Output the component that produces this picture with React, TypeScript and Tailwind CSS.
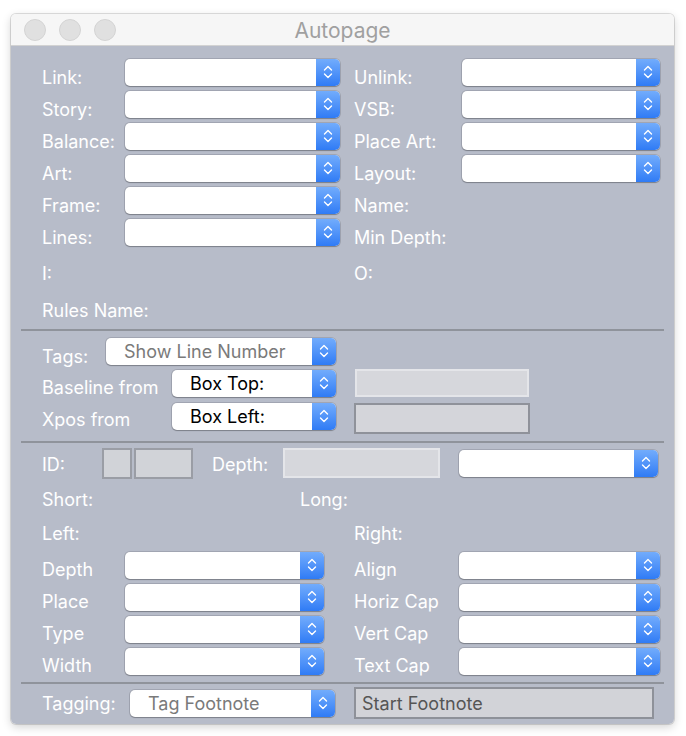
import React from "react";

const font = { fontFamily: "Inter, 'Open Sans', sans-serif" };

function Chevrons() {
  return (
    <svg width="10" height="16" viewBox="0 0 10 16" fill="none" stroke="white" strokeWidth="1.4" strokeLinecap="round" strokeLinejoin="round">
      <path d="M1.5 6 L5 2.5 L8.5 6" />
      <path d="M1.5 10 L5 13.5 L8.5 10" />
    </svg>
  );
}

function Select({ w, text, dark, ml }: { w: string; text?: string; dark?: boolean; ml?: string }) {
  return (
    <div
      className={`${w} ${ml ?? ""} flex h-[27px] shrink-0 items-stretch overflow-hidden rounded-[5px] bg-white shadow-[0_0_0_1px_rgba(120,124,136,0.35),0_1px_1px_rgba(0,0,0,0.3)]`}
    >
      <div
        className={`flex flex-1 items-center pl-[18px] text-[18px] ${dark ? "text-black" : "text-[#7a7a7a]"}`}
      >
        {text}
      </div>
      <div className="flex w-[24px] items-center justify-center bg-gradient-to-b from-[#72acfc] to-[#2f7bf5]">
        <Chevrons />
      </div>
    </div>
  );
}

function Label({ children, w, off }: { children?: React.ReactNode; w?: string; off?: string }) {
  return <div className={`${w ?? ""} ${off ?? "mt-[10px]"} shrink-0 text-[18px] text-white`}>{children}</div>;
}

function Divider() {
  return <div className="mx-[10px] h-[2px] bg-[#8f939b]" />;
}

type Half = { label: string; select?: boolean };

function TopRow({ left, right, h, off }: { left: Half; right: Half; h: string; off?: string }) {
  return (
    <div className={`flex ${h} items-center`}>
      <div className="flex w-[312px] items-center">
        <Label w="w-[83px]" off={off}>{left.label}</Label>
        {left.select && <Select w="w-[215px]" />}
      </div>
      <div className="flex items-center">
        <Label w="w-[108px]" off={off}>{right.label}</Label>
        {right.select && <Select w="w-[198px]" />}
      </div>
    </div>
  );
}

function LowerRow({ left, right }: { left: string; right: string }) {
  return (
    <div className="flex h-[32px] items-center">
      <div className="flex w-[312px] items-center">
        <Label w="w-[83px]" off="mt-[8px]">{left}</Label>
        <Select w="w-[199px]" />
      </div>
      <div className="flex items-center">
        <Label w="w-[105px]" off="mt-[8px]">{right}</Label>
        <Select w="w-[201px]" />
      </div>
    </div>
  );
}

export default function App() {
  const top: [Half, Half][] = [
    [{ label: "Link:", select: true }, { label: "Unlink:", select: true }],
    [{ label: "Story:", select: true }, { label: "VSB:", select: true }],
    [{ label: "Balance:", select: true }, { label: "Place Art:", select: true }],
    [{ label: "Art:", select: true }, { label: "Layout:", select: true }],
    [{ label: "Frame:", select: true }, { label: "Name:" }],
    [{ label: "Lines:", select: true }, { label: "Min Depth:" }],
  ];

  return (
    <div className="h-[736px] w-[686px] bg-white pl-[11px] pt-[14px]" style={font}>
      <div className="flex h-[710px] w-[663px] flex-col overflow-hidden rounded-[5px] shadow-[0_0_0_1px_rgba(0,0,0,0.12),0_3px_10px_rgba(0,0,0,0.18)]">
        <div className="relative flex h-[32px] shrink-0 items-center border-b border-[#d2d2d2] bg-[#f6f6f6]">
          <div className="flex gap-[13px] pl-[13px]">
            <span className="h-[22px] w-[22px] rounded-full border border-[#d3d3d3] bg-[#e0e0e0]" />
            <span className="h-[22px] w-[22px] rounded-full border border-[#d3d3d3] bg-[#e0e0e0]" />
            <span className="h-[22px] w-[22px] rounded-full border border-[#d3d3d3] bg-[#e0e0e0]" />
          </div>
          <div className="absolute inset-0 flex items-center justify-center pt-[3px] text-[21px] text-[#a0a0a0]">
            Autopage
          </div>
        </div>

        <div className="flex flex-1 flex-col bg-[#b7bcc9]">
          <div className="pl-[31px] pt-[10px]">
            {top.map(([l, r], i) => (
              <TopRow key={i} left={l} right={r} h="h-[32px]" />
            ))}
            <TopRow left={{ label: "I:" }} right={{ label: "O:" }} h="h-[38px] pt-[8px]" off="mt-[4px]" />
            <div className="flex h-[42px] items-center pt-[6px]">
              <Label off="mt-0">Rules Name:</Label>
            </div>
          </div>

          <div className="mt-[1px]">
            <Divider />
          </div>

          <div className="pl-[31px] pt-[6px]">
            <div className="flex h-[28px] items-center">
              <Label w="w-[64px]">Tags:</Label>
              <Select w="w-[230px]" text="Show Line Number" />
            </div>
            <div className="mt-[3px] flex h-[30px] items-center">
              <Label w="w-[130px]" off="mt-[9px]">Baseline from</Label>
              <Select w="w-[164px]" text="Box Top:" dark />
              <div className="ml-[19px] h-[28px] w-[174px] border-2 border-[#e4e5e9] bg-[#d6d7dc]" />
            </div>
            <div className="mt-[2px] flex h-[32px] items-center">
              <Label w="w-[130px]" off="mt-[7px]">Xpos from</Label>
              <Select w="w-[164px]" text="Box Left:" dark />
              <div className="ml-[18px] mt-[5px] h-[31px] w-[176px] border-2 border-[#8f929a] bg-[#d4d5da]" />
            </div>
          </div>

          <div className="mt-[9px]">
            <Divider />
          </div>

          <div className="pl-[31px] pt-[4px]">
            <div className="flex h-[32px] items-center">
              <Label w="w-[60px]" off="mt-[3px]">ID:</Label>
              <div className="h-[31px] w-[30px] border-2 border-[#9a9da5] bg-[#d1d3d8]" />
              <div className="ml-[2px] h-[31px] w-[59px] border-2 border-[#9a9da5] bg-[#d1d3d8]" />
              <Label w="ml-[19px] w-[71px]" off="mt-[3px]">Depth:</Label>
              <div className="h-[30px] w-[157px] border-2 border-[#e4e5e9] bg-[#d6d7dc]" />
              <Select w="w-[199px]" ml="ml-[19px]" />
            </div>
            <div className="mt-[4px] flex h-[32px] items-center">
              <Label w="w-[258px]" off="mt-0">Short:</Label>
              <Label off="mt-0">Long:</Label>
            </div>
            <div className="mt-[2px] flex h-[32px] items-center">
              <Label w="w-[312px]" off="mt-0">Left:</Label>
              <Label off="mt-0">Right:</Label>
            </div>
            <LowerRow left="Depth" right="Align" />
            <LowerRow left="Place" right="Horiz Cap" />
            <LowerRow left="Type" right="Vert Cap" />
            <LowerRow left="Width" right="Text Cap" />
          </div>

          <div className="mt-[5px]">
            <Divider />
          </div>

          <div className="flex items-center pl-[31px] pt-[3px]">
            <Label w="w-[88px]" off="mt-0">Tagging:</Label>
            <Select w="w-[205px]" text="Tag Footnote" />
            <div className="ml-[19px] flex h-[32px] w-[300px] items-center border-2 border-[#8e9199] bg-[#d2d3d8] pl-[6px] text-[18px] text-[#555]">
              Start Footnote
            </div>
          </div>
        </div>
      </div>
    </div>
  );
}
